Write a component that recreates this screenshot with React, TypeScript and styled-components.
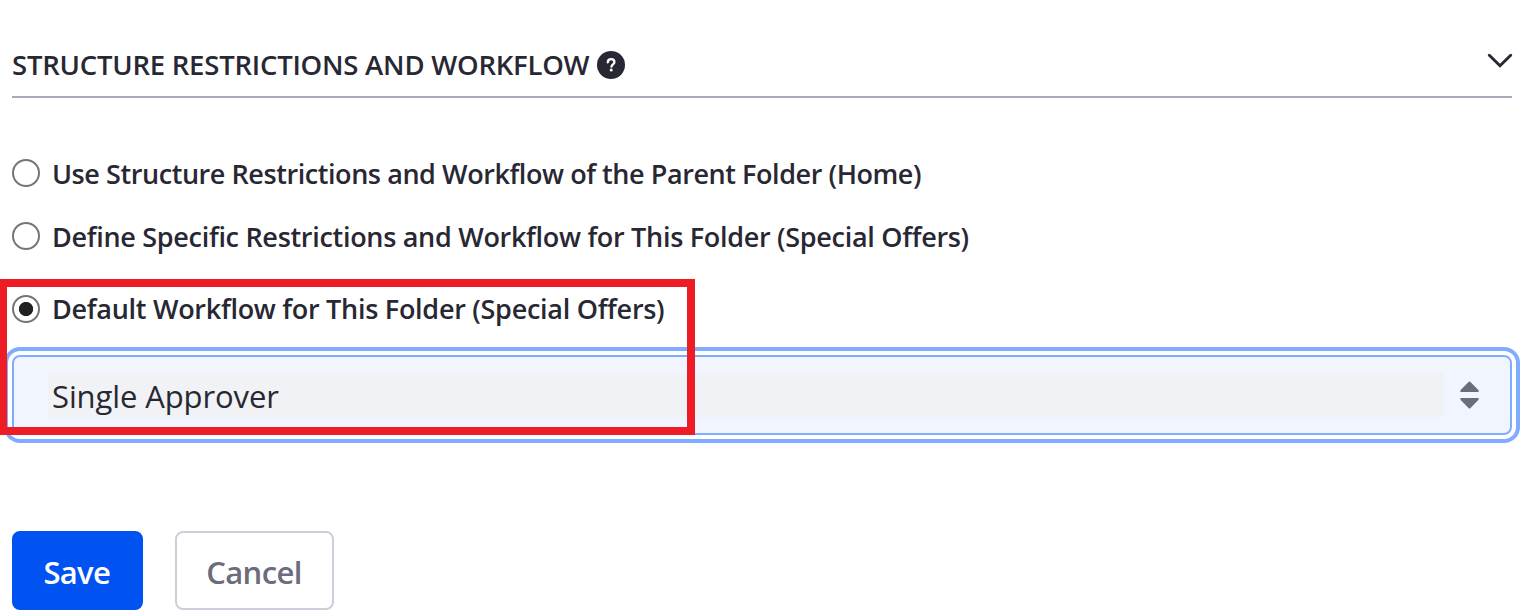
import React, { useState } from "react";
import styled, { createGlobalStyle } from "styled-components";

const GlobalStyle = createGlobalStyle`
  * { box-sizing: border-box; }
  body {
    margin: 0;
    background: #fff;
    color: #272833;
    font-family: "Segoe UI", "Open Sans", "Noto Sans", sans-serif;
    overflow: hidden;
  }
`;

const Page = styled.main`
  position: relative;
  width: 1535px;
  height: 615px;
  padding: 34px 23px 0 12px;
`;

const PanelHeader = styled.header`
  display: flex;
  align-items: center;
  height: 64px;
  padding-bottom: 1px;
  border-bottom: 2px solid #a7a9bc;
`;

const Label = styled.span<{ $size: number; $spacing: number; $weight?: number; $shift?: number }>`
  flex: none;
  font-size: ${(p) => p.$size}px;
  font-weight: ${(p) => p.$weight ?? 600};
  letter-spacing: ${(p) => p.$spacing}px;
  line-height: 40px;
  white-space: nowrap;
  margin-top: ${(p) => p.$shift ?? 0}px;
`;

const Title = styled.h3`
  width: 585px;
  margin: 0;
  display: flex;
`;

const HelpIcon = styled.svg`
  width: 28px;
  height: 28px;
  margin-top: 1px;
`;

const Chevron = styled.svg`
  width: 26px;
  height: 16px;
  margin: 0 -1px 8px auto;
`;

const Options = styled.div`
  display: flex;
  flex-direction: column;
  padding-top: 55px;
`;

const Option = styled.label<{ $gap?: number }>`
  display: flex;
  align-items: center;
  gap: 12px;
  height: 40px;
  margin-bottom: ${(p) => p.$gap ?? 0}px;
`;

const Radio = styled.input`
  appearance: none;
  flex: none;
  width: 28px;
  height: 28px;
  margin: 0;
  border: 2px solid #767676;
  border-radius: 50%;
  background: #fff;
  &:checked {
    background: radial-gradient(circle, #212121 6.7px, #fff 7.5px);
  }
`;

const Select = styled.div`
  display: flex;
  align-items: center;
  justify-content: space-between;
  height: 80px;
  padding: 0 31px 0 34px;
  border: 2px solid #80acff;
  border-radius: 8px;
  background: #f0f5ff;
  box-shadow: 0 0 0 4px #fff, 0 0 0 8px #80acff;
`;

const Value = styled.div`
  display: flex;
  align-items: center;
  width: 1396px;
  height: 44px;
  margin-top: -1px;
  padding-left: 4px;
  background: #f1f2f5;
`;

const Carets = styled.svg`
  width: 19px;
  height: 28px;
`;

const Actions = styled.div`
  display: flex;
  gap: 32.5px;
  margin-top: 96px;
`;

const Button = styled.button<{ $primary?: boolean }>`
  display: flex;
  align-items: center;
  justify-content: center;
  width: ${(p) => (p.$primary ? 130.5 : 159)}px;
  height: 79px;
  padding: 0 1px 0 0;
  border: 2px solid ${(p) => (p.$primary ? "#0053f0" : "#cdced9")};
  border-radius: 8px;
  background: ${(p) => (p.$primary ? "#0053f0" : "#fff")};
  color: ${(p) => (p.$primary ? "#fff" : "#6b6c7e")};
  font-family: inherit;
`;

const Highlight = styled.div`
  position: absolute;
  left: -1px;
  top: 279px;
  width: 696px;
  height: 156px;
  border: 8px solid #ee1c24;
  pointer-events: none;
`;

const options = [
  { text: "Use Structure Restrictions and Workflow of the Parent Folder (Home)", gap: 23, spacing: -0.43, shift: 2 },
  { text: "Define Specific Restrictions and Workflow for This Folder (Special Offers)", gap: 33, spacing: -0.3, shift: 2 },
  { text: "Default Workflow for This Folder (Special Offers)", gap: 26, spacing: -0.28, shift: 0 },
];

export default function App() {
  const [selected, setSelected] = useState(2);
  return (
    <Page>
      <GlobalStyle />
      <PanelHeader>
        <Title>
          <Label $size={27.5} $spacing={-0.23}>STRUCTURE RESTRICTIONS AND WORKFLOW</Label>
        </Title>
        <HelpIcon viewBox="0 0 28 28">
          <circle cx="14" cy="14" r="14" fill="#272833" />
          <path d="M10.8 11.3c.1-2 1.400-3.100 3.300-3.100 2 0 3.300 1.100 3.300 2.800 0 2.300-2.700 2.300-2.900 4.700" fill="none" stroke="#fff" strokeWidth="2.300" strokeLinecap="round" />
          <circle cx="14.200" cy="19" r="1.500" fill="#fff" />
        </HelpIcon>
        <Chevron viewBox="0 0 26 16">
          <path d="M2.300 2.300L13 12.800L23.700 2.300" fill="none" stroke="#272833" strokeWidth="2.900" strokeLinecap="round" strokeLinejoin="miter" />
        </Chevron>
      </PanelHeader>
      <Options>
        {options.map((o, i) => (
          <Option key={o.text} $gap={o.gap}>
            <Radio type="radio" name="workflow" checked={selected === i} onChange={() => setSelected(i)} />
            <Label $size={27} $spacing={o.spacing} $shift={o.shift}>{o.text}</Label>
          </Option>
        ))}
      </Options>
      <Select>
        <Value>
          <Label $size={31} $spacing={-0.1} $weight={400} $shift={2}>Single Approver</Label>
        </Value>
        <Carets viewBox="0 0 19 28">
          <path d="M1 11Q-.4 10.500.7 9L8.500 1Q9.500 0 10.500 1L18.300 9Q19.400 10.500 18 11ZM1 17Q-.4 17.500.7 19L8.500 27Q9.500 28 10.500 27L18.300 19Q19.400 17.500 18 17Z" fill="#6b6c7e" />
        </Carets>
      </Select>
      <Actions>
        <Button $primary><Label $size={31} $spacing={-0.7} $shift={2}>Save</Label></Button>
        <Button><Label $size={31} $spacing={-0.6} $shift={2}>Cancel</Label></Button>
      </Actions>
      <Highlight />
    </Page>
  );
}
